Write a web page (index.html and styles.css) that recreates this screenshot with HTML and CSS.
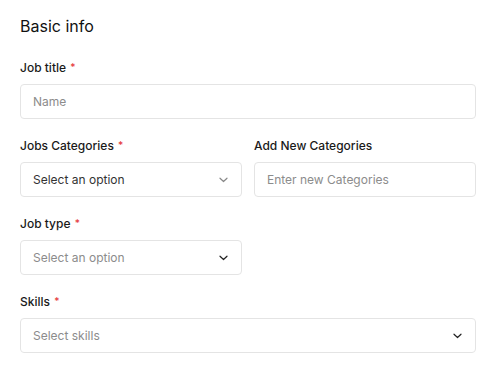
FILE: index.html
```html
<!DOCTYPE html>
<html lang="en">
<head>
    <meta charset="UTF-8">
    <meta name="viewport" content="width=device-width, initial-scale=1.0">
    <title>Basic info</title>
    <link rel="stylesheet" href="styles.css">
</head>
<body>
    <section class="form-card">
        <h2 class="section-title">Basic info</h2>

        <div class="field">
            <label class="field-label">Job title <span class="req">*</span></label>
            <input class="text-input" type="text" placeholder="Name">
        </div>

        <div class="field-row">
            <div class="field">
                <label class="field-label">Jobs Categories <span class="req">*</span></label>
                <div class="select filled">
                    <span>Select an option</span>
                    <svg class="chevron light" width="9" height="6" viewBox="0 0 9 6"><path d="M1 1.2 4.5 4.5 8 1.2" fill="none" stroke="currentColor" stroke-width="1.2" stroke-linecap="round" stroke-linejoin="round"/></svg>
                </div>
            </div>
            <div class="field">
                <label class="field-label">Add New Categories</label>
                <input class="text-input" type="text" placeholder="Enter new Categories">
            </div>
        </div>

        <div class="field-row">
            <div class="field">
                <label class="field-label">Job type <span class="req">*</span></label>
                <div class="select">
                    <span>Select an option</span>
                    <svg class="chevron" width="9" height="6" viewBox="0 0 9 6"><path d="M1 1.2 4.5 4.5 8 1.2" fill="none" stroke="currentColor" stroke-width="1.2" stroke-linecap="round" stroke-linejoin="round"/></svg>
                </div>
            </div>
            <div></div>
        </div>

        <div class="field">
            <label class="field-label">Skills <span class="req">*</span></label>
            <div class="select">
                <span>Select skills</span>
                <svg class="chevron" width="9" height="6" viewBox="0 0 9 6"><path d="M1 1.2 4.5 4.5 8 1.2" fill="none" stroke="currentColor" stroke-width="1.2" stroke-linecap="round" stroke-linejoin="round"/></svg>
            </div>
        </div>
    </section>
</body>
</html>
```

FILE: styles.css
```css
body {
    margin: 0;
    font-family: Inter, 'Noto Sans', sans-serif;
    color: #1a1a1a;
    background: #fff;
}
.form-card {
    width: 456px;
    padding: 16px 20px;
    display: flex;
    flex-direction: column;
    gap: 19px;
}
.section-title {
    margin: 0 0 5px;
    font-size: 16px;
    line-height: 20px;
    font-weight: 400;
    color: #111;
}
.field {
    display: flex;
    flex-direction: column;
    gap: 8px;
}
.field-row {
    display: grid;
    grid-template-columns: 1fr 1fr;
    gap: 12px;
}
.field-label {
    display: block;
    height: 16px;
    font-size: 12px;
    line-height: 16px;
    font-weight: 500;
    color: #1a1a1a;
}
.req {
    color: #e5383b;
    font-size: 10px;
    line-height: 0;
    margin-left: 1px;
    vertical-align: 1px;
}
.text-input,
.select {
    box-sizing: border-box;
    height: 35px;
    width: 100%;
    border: 1px solid #e4e4e4;
    border-radius: 4px;
    padding: 0 12px;
    font-family: inherit;
    font-size: 12px;
    color: #333;
    background: #fff;
    outline: none;
}
.text-input::placeholder {
    color: #8c8c8c;
}
.select {
    display: flex;
    align-items: center;
    justify-content: space-between;
    color: #8c8c8c;
    padding-right: 13px;
}
.select.filled {
    color: #333;
}
.chevron {
    color: #222;
}
.chevron.light {
    color: #888;
}
```
